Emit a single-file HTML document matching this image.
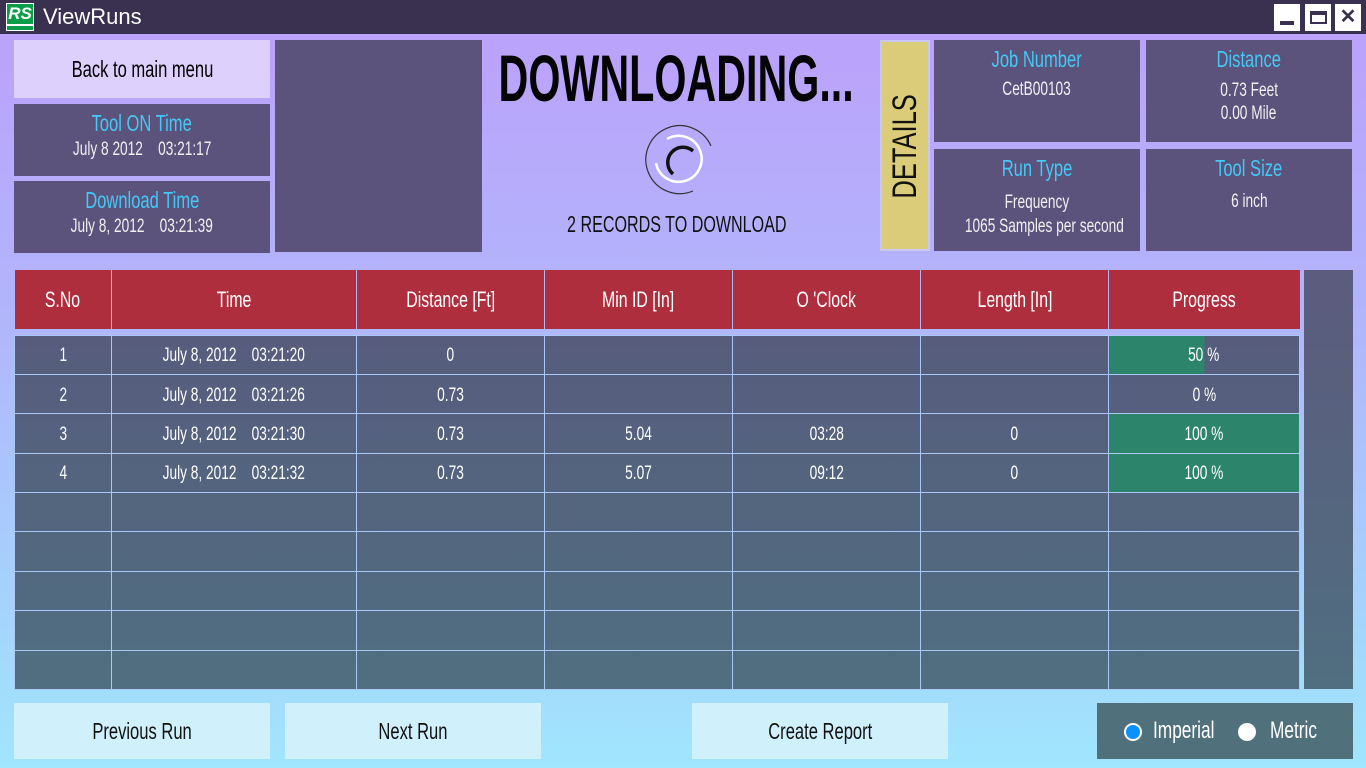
<!DOCTYPE html>
<html><head><meta charset="utf-8"><style>
*{margin:0;padding:0;box-sizing:border-box}
body{width:1366px;height:768px;overflow:hidden;position:relative;background:linear-gradient(#bba2fb 34px,#b2b4fb 300px,#a6d2fc 600px,#a0e6fd 768px);font-family:"Liberation Sans",sans-serif;}
.a{position:absolute}
.n{display:inline-block;transform:scaleX(.72);white-space:nowrap}
.tb{left:0;top:0;width:1366px;height:34px;background:#3a3050}
.box{background:#5c537d;color:#fff;text-align:center;white-space:nowrap}
.lbl{color:#44c8f4;font-size:23px}
.v{font-size:19px;color:#f0f0f0}
.btn{background:#d0f0fc;text-align:center;font-size:23px;color:#111;line-height:56px}
table{border-collapse:collapse;position:absolute;left:14px;top:270px;width:1286px}
th{background:#ae2e3e;color:#fff;font-weight:normal;font-size:22px;height:59px;border-left:1px solid #b0b8f8;white-space:nowrap}
td{height:39.4px;border:1px solid #a8c8f8;color:#fff;font-size:19px;text-align:center;white-space:nowrap;padding-top:3px}
tr.sp td{height:6px;border:none;background:transparent;padding:0}
</style></head><body>
<div class="a tb"></div>
<div class="a" style="left:6px;top:3px;width:28px;height:28px;background:#fff"></div>
<div class="a" style="left:7px;top:4px;width:26px;height:26px;background:#0a9d48;color:#fff;font:italic bold 17px 'Liberation Sans',sans-serif;line-height:20px;text-align:center">RS</div>
<div class="a" style="left:7px;top:24px;width:26px;height:2px;background:#fff"></div>
<div class="a" style="left:43px;top:4px;color:#fff;font:22px 'Liberation Sans',sans-serif">ViewRuns</div>
<div class="a" style="left:1274px;top:4px;width:26px;height:27px;background:#fff"><div class="a" style="left:6px;top:17px;width:14px;height:4px;background:#3a3050"></div></div>
<div class="a" style="left:1305px;top:4px;width:26px;height:27px;background:#fff"><div class="a" style="left:5px;top:7px;width:17px;height:13px;border:2px solid #3a3050;border-top-width:4px"></div></div>
<div class="a" style="left:1335px;top:4px;width:26px;height:27px;background:#fff;color:#3a3050;font:bold 20px 'Liberation Sans',sans-serif;text-align:center;line-height:27px">✕</div>

<div class="a" style="left:14px;top:40px;width:256px;height:58px;background:#ddd0fd;text-align:center;font-size:23px;line-height:58px"><span class="n">Back to main menu</span></div>
<div class="a box" style="left:14px;top:104px;width:256px;height:72px;padding-top:6px"><div class="lbl"><span class="n">Tool ON Time</span></div><div class="v" style="margin-top:2px"><span class="n">July 8 2012 &nbsp;&nbsp;&nbsp;03:21:17</span></div></div>
<div class="a box" style="left:14px;top:181px;width:256px;height:72px;padding-top:6px"><div class="lbl"><span class="n">Download Time</span></div><div class="v" style="margin-top:2px"><span class="n">July 8, 2012 &nbsp;&nbsp;&nbsp;03:21:39</span></div></div>
<div class="a box" style="left:275px;top:40px;width:207px;height:212px"></div>

<div class="a" style="left:326px;top:40px;width:700px;text-align:center;font:bold 66px 'Liberation Sans',sans-serif;color:#050505"><span class="n" style="transform:scaleX(.625)">DOWNLOADING...</span></div>
<svg class="a" style="left:639px;top:119px" width="80" height="80" viewBox="0 0 80 80">
<path d="M 54 72 A 34 34 0 1 1 72 27" fill="none" stroke="#333" stroke-width="1.2"/>
<path d="M 17 44 A 23 23 0 1 0 28 20" fill="none" stroke="#fff" stroke-width="2.5"/>
<path d="M 34 55 A 15 15 0 1 1 54 32" fill="none" stroke="#111" stroke-width="3.5"/>
</svg>
<div class="a" style="left:440px;top:211px;width:473px;text-align:center;font-size:23px;color:#111"><span class="n" style="transform:scaleX(.7)">2 RECORDS TO DOWNLOAD</span></div>

<div class="a" style="left:880px;top:40px;width:50px;height:211px;background:#dacc78;border:2px solid #c8c8f0;overflow:hidden"><div class="a" style="left:-80px;top:92px;width:206px;text-align:center;font-size:34px;transform:rotate(-90deg);color:#111;line-height:24px"><span class="n" style="transform:scaleX(.75)">DETAILS</span></div></div>
<div class="a box" style="left:934px;top:40px;width:206px;height:102px;padding-top:6px"><div class="lbl"><span class="n">Job Number</span></div><div class="v" style="margin-top:6px"><span class="n">CetB00103</span></div></div>
<div class="a box" style="left:1146px;top:40px;width:206px;height:102px;padding-top:6px"><div class="lbl"><span class="n">Distance</span></div><div class="v" style="margin-top:6px;line-height:23px"><span class="n">0.73 Feet</span><br><span class="n">0.00 Mile</span></div></div>
<div class="a box" style="left:934px;top:149px;width:206px;height:102px;padding-top:6px"><div class="lbl"><span class="n">Run Type</span></div><div class="v" style="margin-top:9px;line-height:24px"><span class="n">Frequency</span><br><span class="n">1065 Samples per second</span></div></div>
<div class="a box" style="left:1146px;top:149px;width:206px;height:102px;padding-top:6px"><div class="lbl"><span class="n">Tool Size</span></div><div class="v" style="margin-top:9px"><span class="n">6 inch</span></div></div>

<div class="a" style="left:14px;top:335px;width:1286px;height:354px;background:linear-gradient(#575c7d,#506f80)"></div>
<table>
<tr><th style="width:97px;border-left:none"><span class="n">S.No</span></th><th style="width:245px"><span class="n">Time</span></th><th style="width:188px"><span class="n">Distance [Ft]</span></th><th style="width:188px"><span class="n">Min ID [In]</span></th><th style="width:188px"><span class="n">O 'Clock</span></th><th style="width:188px"><span class="n">Length [In]</span></th><th><span class="n">Progress</span></th></tr>
<tr class="sp"><td colspan="7"></td></tr>
<tr><td><span class="n">1</span></td><td><span class="n">July 8, 2012 &nbsp;&nbsp;&nbsp;03:21:20</span></td><td><span class="n">0</span></td><td></td><td></td><td></td><td style="background:linear-gradient(90deg,#2c846a 50%,transparent 50%)"><span class="n">50 %</span></td></tr>
<tr><td><span class="n">2</span></td><td><span class="n">July 8, 2012 &nbsp;&nbsp;&nbsp;03:21:26</span></td><td><span class="n">0.73</span></td><td></td><td></td><td></td><td><span class="n">0 %</span></td></tr>
<tr><td><span class="n">3</span></td><td><span class="n">July 8, 2012 &nbsp;&nbsp;&nbsp;03:21:30</span></td><td><span class="n">0.73</span></td><td><span class="n">5.04</span></td><td><span class="n">03:28</span></td><td><span class="n">0</span></td><td style="background:#2c846a"><span class="n">100 %</span></td></tr>
<tr><td><span class="n">4</span></td><td><span class="n">July 8, 2012 &nbsp;&nbsp;&nbsp;03:21:32</span></td><td><span class="n">0.73</span></td><td><span class="n">5.07</span></td><td><span class="n">09:12</span></td><td><span class="n">0</span></td><td style="background:#2c846a"><span class="n">100 %</span></td></tr>
<tr><td></td><td></td><td></td><td></td><td></td><td></td><td></td></tr>
<tr><td></td><td></td><td></td><td></td><td></td><td></td><td></td></tr>
<tr><td></td><td></td><td></td><td></td><td></td><td></td><td></td></tr>
<tr><td></td><td></td><td></td><td></td><td></td><td></td><td></td></tr>
<tr><td></td><td></td><td></td><td></td><td></td><td></td><td></td></tr>
</table>
<div class="a" style="left:1304px;top:270px;width:49px;height:419px;background:linear-gradient(#5c5b7e,#506e80)"></div>

<div class="a btn" style="left:14px;top:703px;width:256px;height:56px"><span class="n">Previous Run</span></div>
<div class="a btn" style="left:285px;top:703px;width:256px;height:56px"><span class="n">Next Run</span></div>
<div class="a btn" style="left:692px;top:703px;width:256px;height:56px"><span class="n">Create Report</span></div>
<div class="a" style="left:1097px;top:703px;width:256px;height:56px;background:#50707c;color:#fff;font-size:24px;line-height:56px">
<span class="a" style="left:27px;top:20px;width:18px;height:18px;border-radius:50%;background:#0a90ff;border:2px solid #fff"></span><span class="a n" style="left:56px;transform-origin:left">Imperial</span>
<span class="a" style="left:141px;top:20px;width:18px;height:18px;border-radius:50%;background:#fff"></span><span class="a n" style="left:173px;transform-origin:left">Metric</span>
</div>
</body></html>
